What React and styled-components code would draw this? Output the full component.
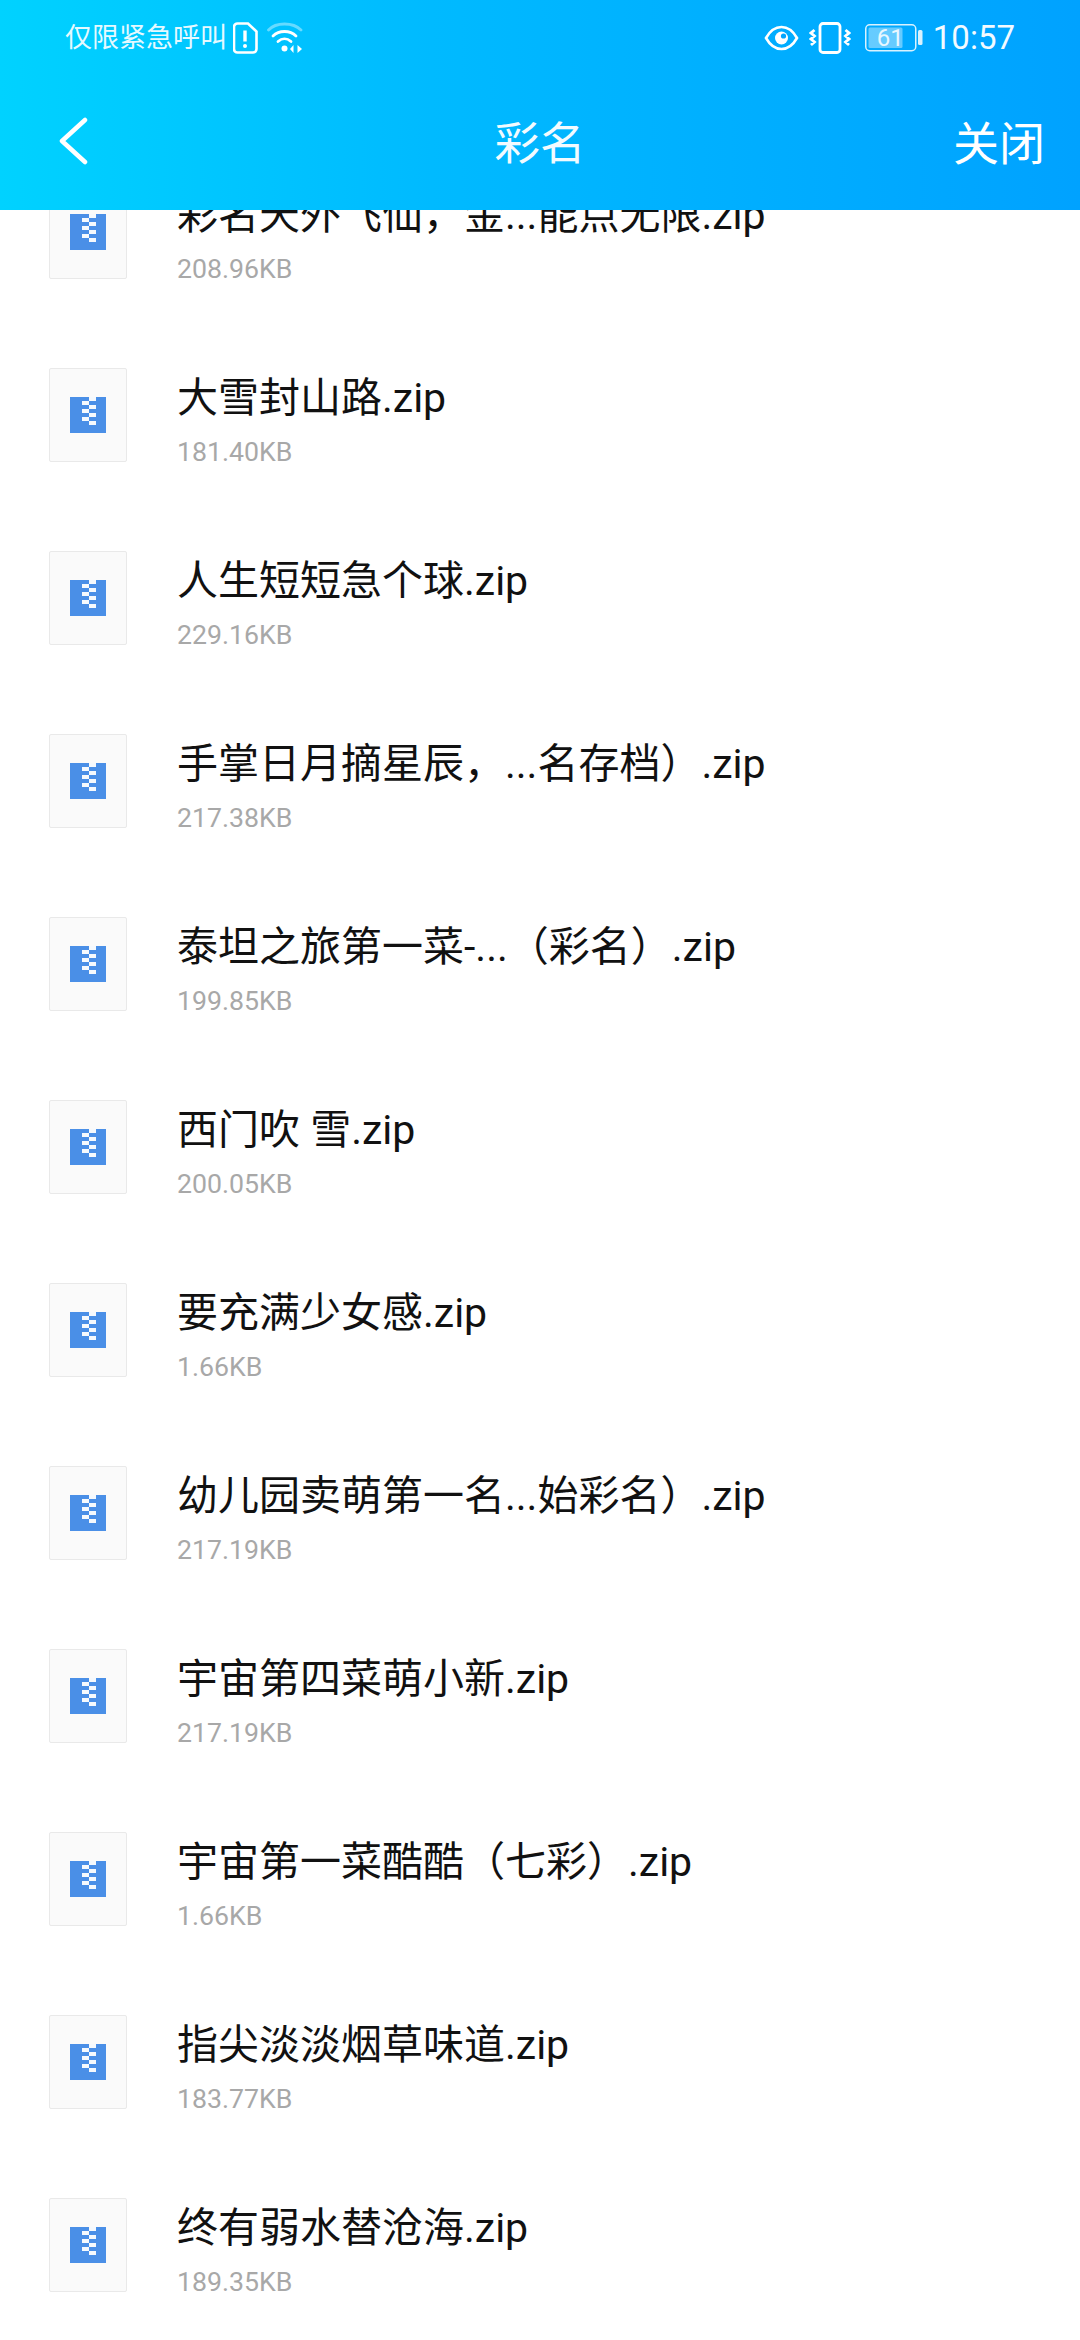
import React from "react";
import styled, { createGlobalStyle } from "styled-components";

const Global = createGlobalStyle`
  html, body { margin: 0; padding: 0; background: #fff; }
  body { font-family: Roboto, "Noto Sans CJK SC", sans-serif; }
`;
const Page = styled.div`
  width: 1080px; height: 2340px; overflow: hidden; background: #fff;
  display: flex; flex-direction: column;
`;
const Header = styled.header`
  position: relative; z-index: 2; flex: none; height: 210px;
  background: linear-gradient(90deg, #00d2ff 0%, #00baff 40%, #00a2ff 100%);
  color: #fff; display: flex; flex-direction: column;
`;
const StatusBar = styled.div`
  height: 76px; padding: 0 65px 0 65px; display: flex; align-items: center; justify-content: space-between;
`;
const StatusGroup = styled.div`display: flex; align-items: center;`;
const Carrier = styled.span`
  font-size: 27px; line-height: 30px; opacity: .9; margin-right: 6px;
`;
const Clock = styled.span`font-size: 33px; line-height: 40px; margin-left: 10px; opacity: .95;`;
const NavBar = styled.div`
  flex: 1; display: grid; grid-template-columns: 1fr auto 1fr; align-items: center;
  padding: 0 35px; margin-top: -4px;
`;
const BackButton = styled.div`display: flex; margin-left: 24px;`;
const Title = styled.div`font-size: 45.5px; line-height: 60px; opacity: .95; margin-top: 7px;`;
const Close = styled.div`justify-self: end; font-size: 46px; line-height: 60px; margin-top: 5px;`;
const List = styled.div`margin-top: -25px; flex: 1; min-height: 0; padding-left: 49px;`;
const Row = styled.div`
  height: 183px; display: flex; align-items: flex-start; gap: 50px;
`;
const FileIcon = styled.div`
  flex: none; width: 78px; height: 94px; box-sizing: border-box;
  background: #fafafa; border: 1px solid #e9e9e9; border-radius: 2px;
  display: flex; align-items: center; justify-content: center;
`;
const Info = styled.div`display: flex; flex-direction: column;`;
const Name = styled.div`
  font-size: 41px; line-height: 56px; color: #111; white-space: pre; margin-top: 2px;
`;
const Size = styled.div`font-size: 26.7px; line-height: 32px; color: #a8a8a8; margin-top: 10px;`;

const Zip = () => (
  <svg width="36" height="36" viewBox="0 0 36 36">
    <rect width="36" height="36" fill="#4a8fe7" />
    <g fill="#fff" opacity=".95">
      <rect x="19" y="0" width="7" height="4" /><rect x="12" y="4" width="7" height="4" />
      <rect x="19" y="8" width="7" height="4" /><rect x="12" y="12" width="7" height="4" />
      <rect x="19" y="16" width="7" height="4" /><rect x="12" y="20" width="7" height="4" />
      <rect x="19" y="24" width="7" height="4" />
    </g>
  </svg>
);
const SimAlert = () => (
  <svg width="25" height="32" viewBox="0 0 25 32" fill="none" stroke="#fff" strokeWidth="2.6" style={{ marginRight: 9 }}>
    <path d="M4.500 1.500h10.500l8.500 8v17.500a3.500 3.500 0 0 1-3.500 3.500H4.500a3.500 3.500 0 0 1-3.500-3.500V5a3.500 3.500 0 0 1 3.500-3.500z" />
    <path d="M12 8.500v11" strokeWidth="3.400" /><circle cx="12" cy="24" r="2" fill="#fff" stroke="none" />
  </svg>
);
const Wifi = () => (
  <svg width="36" height="32" viewBox="0 0 36 32" fill="none" stroke="#fff" strokeWidth="2.800" strokeLinecap="round">
    <path d="M1.500 8C9 0 26 0 34 8" opacity=".4" />
    <path d="M6 14C12 8 23 8 29 14" /><path d="M11 19.500c4-3.500 9-3.500 13 0" />
    <circle cx="17.500" cy="26.500" r="3" fill="#fff" stroke="none" />
    <path d="M26.500 23l-3.500 4 3.500 4zM30.500 23l4.500 4-4.500 4z" fill="#fff" stroke="none" />
  </svg>
);
const Eye = () => (
  <svg width="35" height="26" viewBox="0 0 34 26" fill="none" stroke="#fff" strokeWidth="2.600" style={{ marginRight: 10 }}>
    <path d="M1.500 13C6 5 11 2 17 2s11 3 15.500 11C28 21 23 24 17 24S6 21 1.500 13z" />
    <circle cx="17" cy="13" r="6.500" fill="#fff" stroke="none" />
    <circle cx="19" cy="11" r="2.600" fill="#00a6ff" stroke="none" />
  </svg>
);
const Vibrate = () => (
  <svg width="42" height="32" viewBox="0 0 42 32" fill="none" stroke="#fff" strokeWidth="2.800" style={{ marginRight: 14 }}>
    <rect x="11" y="1.500" width="20" height="29" rx="3" />
    <path d="M5.500 8L2 11l3.500 3L2 17l3.500 3L2 23M36.500 8l3.500 3-3.500 3 3.500 3-3.500 3 3.500 3" strokeWidth="2.800" />
  </svg>
);
const Battery = () => (
  <svg width="58" height="28" viewBox="0 0 58 28">
    <rect x=".75" y=".75" width="50" height="26" rx="4" fill="none" stroke="#fff" strokeWidth="1.500" opacity=".85" />
    <rect x="3.500" y="3.500" width="34" height="20.500" rx="1.500" fill="#fff" opacity=".4" />
    <rect x="53" y="6" width="4.500" height="15" rx="1.500" fill="#fff" opacity=".85" />
  </svg>
);
const BatteryWrap = styled.span`position: relative; display: inline-flex;`;
const BatteryLevel = styled.span`
  position: absolute; left: 0; width: 51px; top: 0; text-align: center;
  font-size: 24px; line-height: 28px; color: #fff; opacity: .85;
`;
const Back = () => (
  <svg width="30" height="48" viewBox="0 0 30 48" fill="none" stroke="#fff" strokeWidth="4.500" strokeLinecap="round" strokeLinejoin="round">
    <path d="M26 3L3 24l23 21" />
  </svg>
);

const files = [
  ["彩名天外飞仙，金...能点无限.zip", "208.96KB"],
  ["大雪封山路.zip", "181.40KB"],
  ["人生短短急个球.zip", "229.16KB"],
  ["手掌日月摘星辰，...名存档）.zip", "217.38KB"],
  ["泰坦之旅第一菜-...（彩名）.zip", "199.85KB"],
  ["西门吹 雪.zip", "200.05KB"],
  ["要充满少女感.zip", "1.66KB"],
  ["幼儿园卖萌第一名...始彩名）.zip", "217.19KB"],
  ["宇宙第四菜萌小新.zip", "217.19KB"],
  ["宇宙第一菜酷酷（七彩）.zip", "1.66KB"],
  ["指尖淡淡烟草味道.zip", "183.77KB"],
  ["终有弱水替沧海.zip", "189.35KB"],
];

export default function App() {
  return (
    <Page>
      <Global />
      <Header>
        <StatusBar>
          <StatusGroup>
            <Carrier>仅限紧急呼叫</Carrier>
            <SimAlert />
            <Wifi />
          </StatusGroup>
          <StatusGroup>
            <Eye />
            <Vibrate />
            <BatteryWrap><Battery /><BatteryLevel>61</BatteryLevel></BatteryWrap>
            <Clock>10:57</Clock>
          </StatusGroup>
        </StatusBar>
        <NavBar>
          <BackButton><Back /></BackButton>
          <Title>彩名</Title>
          <Close>关闭</Close>
        </NavBar>
      </Header>
      <List>
        {files.map(([name, size]) => (
          <Row key={name}>
            <FileIcon><Zip /></FileIcon>
            <Info>
              <Name>{name}</Name>
              <Size>{size}</Size>
            </Info>
          </Row>
        ))}
      </List>
    </Page>
  );
}
